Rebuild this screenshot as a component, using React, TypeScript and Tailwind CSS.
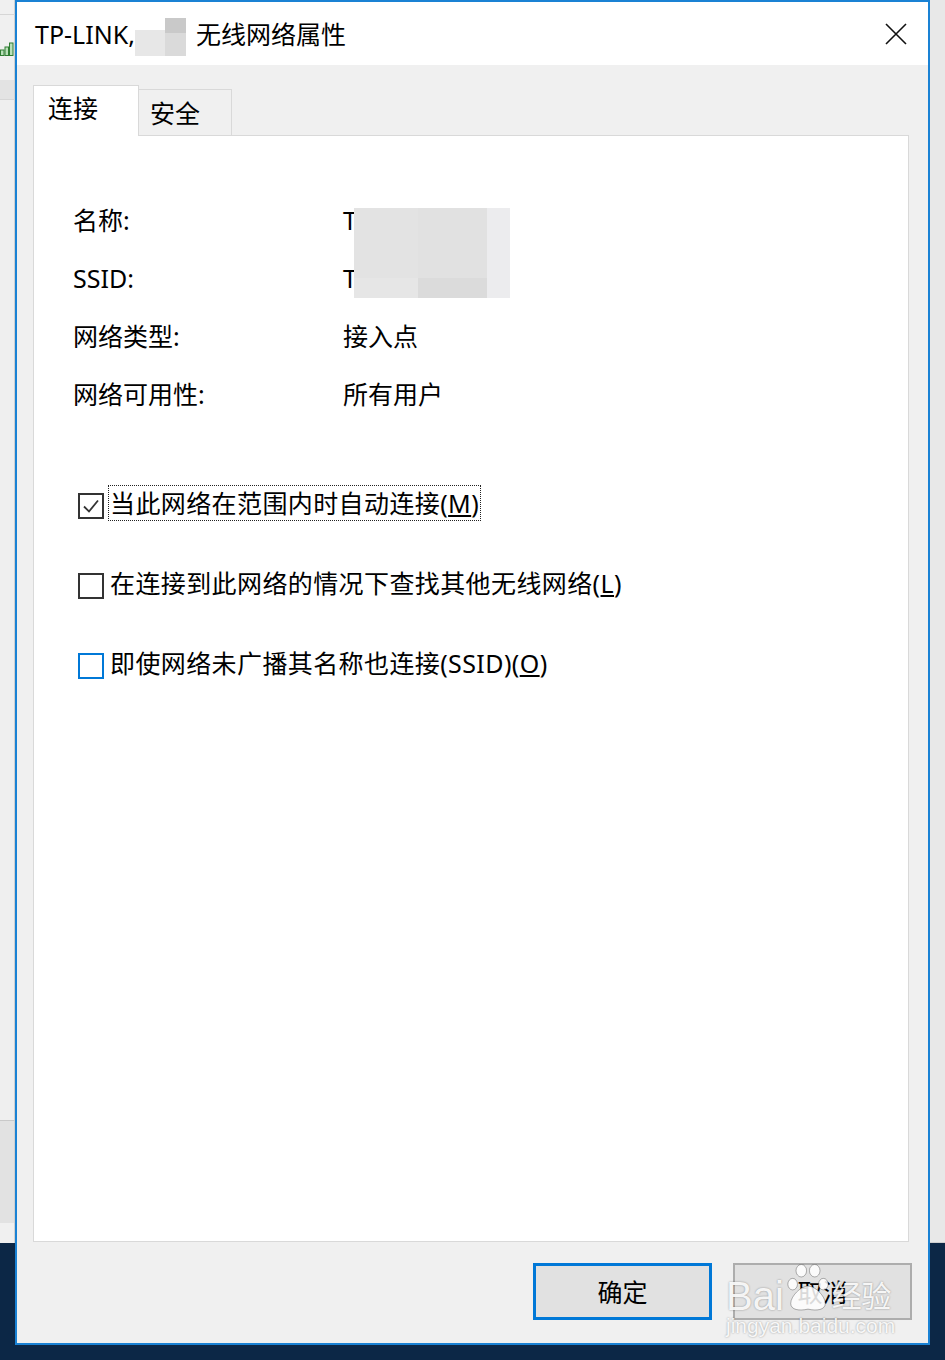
import React from "react";

const FONT = "font-['Noto_Sans','Noto_Sans_CJK_SC',sans-serif]";

// info rows shown on the 连接 tab
const infoRows = [
  { label: "名称:", value: "T" },
  { label: "SSID:", value: "T" },
  { label: "网络类型:", value: "接入点" },
  { label: "网络可用性:", value: "所有用户" },
];

function Checkbox({ checked, hover }: { checked?: boolean; hover?: boolean }) {
  return (
    <div
      className={`w-[26px] h-[26px] border-2 bg-white flex items-center justify-center shrink-0 ${
        hover ? "border-[#0078d7]" : "border-[#333333]"
      }`}
    >
      {checked && (
        <svg viewBox="0 0 22 22" className="w-[22px] h-[22px]">
          <path d="M4 11.5 L9 16.5 L18 5.5" fill="none" stroke="#333333" strokeWidth="1.8" />
        </svg>
      )}
    </div>
  );
}

function SignalBars() {
  return (
    <svg viewBox="0 0 15 16" className="w-[15px] h-[16px]">
      <rect x="0.5" y="10" width="3.5" height="5.5" fill="#b9e0b9" stroke="#2f7d32" strokeWidth="1" />
      <rect x="5" y="7" width="3.5" height="8.5" fill="#b9e0b9" stroke="#2f7d32" strokeWidth="1" />
      <rect x="9.5" y="3" width="3.5" height="12.5" fill="#b9e0b9" stroke="#2f7d32" strokeWidth="1" />
    </svg>
  );
}

// baidu jingyan watermark sitting over the cancel button
function Watermark() {
  return (
    <div className="absolute left-[709px] top-[1258px] w-[170px] flex flex-col pointer-events-none select-none text-white/90 [text-shadow:0_0_2px_rgba(0,0,0,0.4)]">
      <div className="flex items-end h-[56px]">
        <span className="font-['Liberation_Sans',sans-serif] text-[40px] leading-[40px]">Bai</span>
        <svg viewBox="0 0 50 52" className="w-[48px] h-[52px] mb-[2px]">
          <g fill="rgba(255,255,255,0.85)" stroke="rgba(0,0,0,0.3)" strokeWidth="1">
            <ellipse cx="9" cy="22" rx="5" ry="6" />
            <ellipse cx="18" cy="8" rx="5.5" ry="6.5" />
            <ellipse cx="32" cy="8" rx="5.5" ry="6.5" />
            <ellipse cx="41" cy="22" rx="5" ry="6" />
            <path d="M25 24 C33 24 43 35 43 42 C43 49 34 50 25 48 C16 50 7 49 7 42 C7 35 17 24 25 24 Z" />
          </g>
        </svg>
        <span className="text-[30px] leading-[40px] tracking-[-0.5px]">经验</span>
      </div>
      <div className="font-['Liberation_Sans',sans-serif] text-[21px] leading-[24px] -mt-[2px]">
        jingyan.baidu.com
      </div>
    </div>
  );
}

export default function App() {
  return (
    <div className={`flex w-[945px] h-[1360px] overflow-hidden bg-[#0c2746] text-black ${FONT}`}>
      {/* Window behind, left side */}
      <div className="w-[15px] flex flex-col">
        <div className="h-[15px] bg-[#f0f0f0] border-b border-[#d6d6d6] border-r border-r-[#d0d0d0]" />
        <div className="h-[65px] bg-[#f0f0f0] border-r border-[#d0d0d0] flex flex-col pt-[25px]">
          <SignalBars />
        </div>
        <div className="h-[20px] bg-[#e3e3e3] border-b border-[#d6d6d6] border-r border-r-[#d0d0d0]" />
        <div className="h-[1020px] bg-[#efefef] border-r border-[#d0d0d0]" />
        <div className="h-[103px] bg-[#e2e2e2] border-t border-[#c9c9c9] border-r border-r-[#d0d0d0]" />
        <div className="h-[20px] bg-[#f0f0f0] border-r border-[#d0d0d0]" />
      </div>

      {/* Dialog */}
      <div className="relative w-[915px] h-[1345px] border-2 border-[#1a82d4] bg-[#f0f0f0] flex flex-col">
        {/* Title bar */}
        <div className="h-[63px] bg-white flex items-center pl-[18px] pr-[21px]">
          <span className="w-[161px] text-[25px] leading-[32px]">TP-LINK,</span>
          <span className="text-[25px] leading-[32px]">无线网络属性</span>
          <div className="flex-1" />
          <svg viewBox="0 0 22 22" className="w-[22px] h-[22px]">
            <path d="M1 1 L21 21 M21 1 L1 21" stroke="#111" strokeWidth="1.6" />
          </svg>
        </div>
        {/* redacted title part */}
        <div className="absolute left-[118px] top-[16px] w-[51px] h-[38px] flex">
          <div className="w-[30px] flex flex-col">
            <div className="h-[12px] bg-white" />
            <div className="flex-1 bg-[#e7e7e7]" />
          </div>
          <div className="flex-1 flex flex-col">
            <div className="h-[15px] bg-[#c9c9c9]" />
            <div className="flex-1 bg-[#dadada]" />
          </div>
        </div>

        {/* Body */}
        <div className="flex-1 flex flex-col px-[16px] pt-[20px] pb-[23px]">
          {/* Tabs */}
          <div className="h-[50px] flex items-end">
            <div className="relative z-10 w-[106px] h-[51px] -mb-px bg-white border border-b-0 border-[#d9d9d9] pl-[14px] pt-[6px]">
              <span className="text-[25px] leading-[32px]">连接</span>
            </div>
            <div className="w-[93px] h-[46px] bg-[#f0f0f0] border border-l-0 border-b-0 border-[#d9d9d9] pl-[11px] pt-[7px]">
              <span className="text-[25px] leading-[32px]">安全</span>
            </div>
          </div>

          {/* Tab panel */}
          <div className="relative w-[876px] h-[1107px] bg-white border border-[#d9d9d9] pl-[39px] pt-[55px]">
            <div className="flex flex-col">
              {infoRows.map((row) => (
                <div key={row.label} className="h-[58px] flex items-center text-[25px]">
                  <span className="w-[270px] leading-[32px]">{row.label}</span>
                  <span className="leading-[32px]">{row.value}</span>
                </div>
              ))}
            </div>

            {/* redacted values */}
            <div className="absolute left-[320px] top-[72px] w-[156px] h-[90px] flex">
              <div className="w-[64px] flex flex-col">
                <div className="h-[70px] bg-[#e3e3e3]" />
                <div className="flex-1 bg-[#e6e6e6]" />
              </div>
              <div className="w-[69px] flex flex-col">
                <div className="h-[70px] bg-[#e1e1e1]" />
                <div className="flex-1 bg-[#dbdbdb]" />
              </div>
              <div className="flex-1 bg-[#ececee]" />
            </div>

            <div className="mt-[43px] flex flex-col pl-[5px] text-[25px] tracking-[0.4px]">
              <div className="h-[80px] flex items-center gap-[5px]">
                <Checkbox checked />
                <span className="leading-[34px] px-[1px] -mt-[6px] outline outline-1 outline-dotted outline-[#222]">
                  当此网络在范围内时自动连接(<span className="underline underline-offset-2">M</span>)
                </span>
              </div>
              <div className="h-[80px] flex items-center gap-[5px]">
                <Checkbox />
                <span className="leading-[34px] px-[1px] -mt-[6px]">
                  在连接到此网络的情况下查找其他无线网络(<span className="underline underline-offset-2">L</span>)
                </span>
              </div>
              <div className="h-[80px] flex items-center gap-[5px]">
                <Checkbox hover />
                <span className="leading-[34px] px-[1px] -mt-[6px]">
                  即使网络未广播其名称也连接(SSID)(<span className="underline underline-offset-2">O</span>)
                </span>
              </div>
            </div>
          </div>

          {/* Buttons */}
          <div className="mt-[21px] flex justify-end gap-[21px]">
            <button className="w-[179px] h-[57px] bg-[#e1e1e1] border-[3px] border-[#0078d7] text-[25px] leading-[32px]">
              确定
            </button>
            <button className="w-[179px] h-[57px] bg-[#e1e1e1] border-2 border-[#adadad] text-[25px] leading-[32px]">
              取消
            </button>
          </div>
        </div>

        <Watermark />
      </div>

      {/* Window behind, right side */}
      <div className="w-[15px] flex flex-col">
        <div className="h-[1243px] bg-[#e8e8e8] border-b border-[#cfcfcf]" />
      </div>
    </div>
  );
}
